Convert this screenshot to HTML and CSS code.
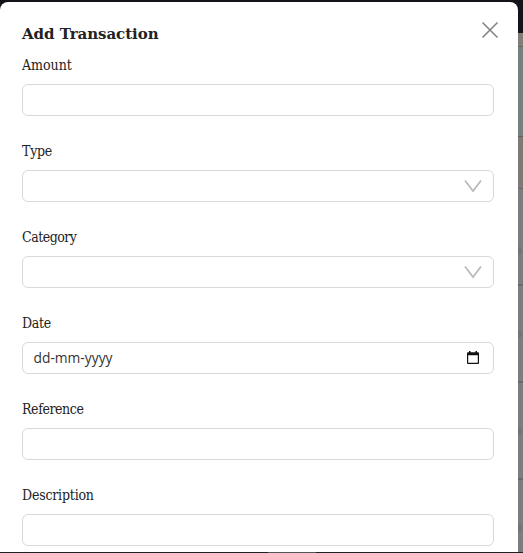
FILE: index.html
```html
<!DOCTYPE html>
<html lang="en">
<head>
<meta charset="utf-8">
<title>Add Transaction</title>
<link rel="stylesheet" href="styles.css">
</head>
<body>
<div class="screen">
  <main class="modal">
    <header class="head">
      <h1 class="title">Add Transaction</h1>
      <svg class="close" width="18" height="18" viewBox="0 0 18 18"><path d="M1.5 1.5l15 15M16.500 1.500l-15 15"/></svg>
    </header>
    <form class="form">
      <div class="field"><label class="label amount">Amount</label><div class="box"></div></div>
      <div class="field"><label class="label type">Type</label><div class="box"><svg class="chevron" width="18" height="14" viewBox="0 0 18 14"><path d="M1 1.500L9 12L17 1.500"/></svg></div></div>
      <div class="field"><label class="label category">Category</label><div class="box"><svg class="chevron" width="18" height="14" viewBox="0 0 18 14"><path d="M1 1.500L9 12L17 1.500"/></svg></div></div>
      <div class="field"><label class="label date">Date</label><div class="box"><span class="placeholder">dd-mm-yyyy</span><svg class="calendar" width="12" height="13" viewBox="0 0 12 13"><path d="M2 0h1.500v1.300h5V0H10v1.300h1q1 0 1 1V12q0 1-1 1H1q-1 0-1-1V2.300q0-1 1-1h1zM1.200 4.200v7.600h9.600V4.200z" fill-rule="evenodd"/></svg></div></div>
      <div class="field"><label class="label reference">Reference</label><div class="box"></div></div>
      <div class="field"><label class="label description">Description</label><div class="box"></div></div>
    </form>
  </main>
  <div class="backdrop">
    <div class="bar"></div><div class="heading"></div><div class="income"></div><div class="expense"></div>
    <div class="row first"><i class="dot"></i></div>
    <div class="row"><i class="dot"></i></div>
    <div class="row"><i class="dot"></i></div>
    <div class="row"><i class="dot"></i></div>
  </div>
</div>
<footer class="edge"><div class="handle"></div></footer>
</body>
</html>
```
FILE: styles.css
```css
* { box-sizing: border-box; }
body { margin: 0; width: 523px; height: 553px; overflow: hidden; background: #15131a; color: #222; }
.screen { display: flex; height: 552px; background: linear-gradient(#15131a 33px, #7d7d7d 33px); }
.modal { width: 518px; height: 550px; margin-top: 2px; padding: 19px 24px 0 22px; background: #fff; border-radius: 8px 8px 0 0; }
.head { display: flex; justify-content: space-between; height: 33px; }
.title { margin: 0; font: bold 15px/26px "DejaVu Serif", serif; letter-spacing: -0.05px; white-space: nowrap; }
.close { margin-right: -5px; fill: none; stroke: #858585; stroke-width: 1.6; }
.field { height: 86px; }
.label { display: block; height: 30px; font: 14px/23px "DejaVu Serif", serif; font-stretch: condensed; }
.amount { letter-spacing: 0; }
.type { letter-spacing: -0.25px; }
.category { letter-spacing: -0.5px; }
.date { letter-spacing: -0.3px; }
.reference { letter-spacing: -0.4px; }
.description { letter-spacing: -0.2px; }
.box { display: flex; align-items: center; height: 32px; padding: 0 11px; border: 1px solid #d9d9d9; border-radius: 6px; }
.chevron { margin-left: auto; fill: none; stroke: #b9b9b9; stroke-width: 1.7; }
.placeholder { font: 13.8px/22px "Open Sans", sans-serif; color: #333; margin-left: -0.5px; }
.calendar { margin: -1px 3px 0 auto; fill: #111; }
.backdrop { width: 5px; height: 552px; overflow: hidden; background: #7d7d7d; }
.bar { height: 33px; background: #15131a; }
.heading { height: 14px; background: #827c7b; border-bottom: 1px solid #686868; }
.income { height: 90px; background: #76807d; border-bottom: 1px solid #606060; }
.expense { height: 52px; background: #807777; border-bottom: 1px solid #696969; }
.row { display: flex; align-items: center; height: 97px; border-bottom: 2px solid #696969; }
.first { padding-top: 28px; }
.dot { width: 8px; height: 8px; margin-left: -4px; border-radius: 50%; background: #747474; }
.edge { display: flex; height: 1px; background: #202020; }
.handle { width: 48px; margin-left: 268px; background: #555; }
```
